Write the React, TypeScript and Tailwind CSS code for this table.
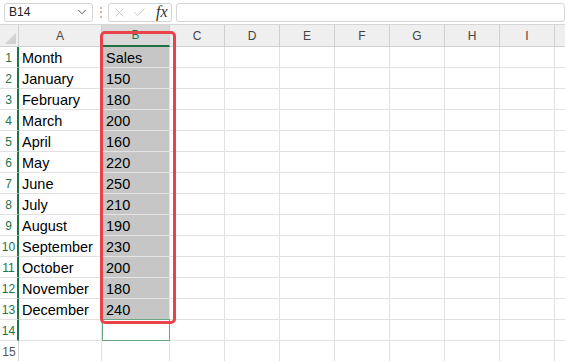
import { ChevronDown, X, Check } from 'lucide-react'

const rows: [string, string][] = [
  ['Month', 'Sales'],
  ['January', '150'],
  ['February', '180'],
  ['March', '200'],
  ['April', '160'],
  ['May', '220'],
  ['June', '250'],
  ['July', '210'],
  ['August', '190'],
  ['September', '230'],
  ['October', '200'],
  ['November', '180'],
  ['December', '240'],
  ['', ''],
  ['', ''],
]

const otherCols = ['C', 'D', 'E', 'F', 'G', 'H', 'I']

export default function App() {
  return (
    <div className="relative w-[565px] h-[361px] overflow-hidden bg-white" style={{ fontFamily: '"Liberation Sans", Arial, sans-serif' }}>
      {/* Formula bar */}
      <div className="flex items-center h-[25px] border-b border-[#d6d6d6] pl-[4px]">
        <div className="flex items-center justify-between w-[89px] h-[19px] border border-[#d4d4d4] rounded-[3px] pl-[4px] pr-[3px] text-[12px] text-[#222]">
          <span>B14</span>
          <ChevronDown size={14} strokeWidth={1.5} className="text-[#444]" />
        </div>
        <div className="w-[15px] flex justify-center text-[#9a9a9a] text-[12px] leading-none">⋮</div>
        <div className="flex items-center gap-[5px] w-[64px] h-[19px] border border-[#d4d4d4] rounded-[3px] pl-[3px]">
          <X size={15} strokeWidth={1} className="text-[#b4b4b4]" />
          <Check size={15} strokeWidth={1} className="text-[#b4b4b4]" />
          <span className="italic text-[16px] leading-none text-[#333] ml-[4px]" style={{ fontFamily: '"Liberation Serif", serif' }}>fx</span>
        </div>
        <div className="ml-[4px] flex-1 h-[19px] border border-[#d4d4d4] rounded-[3px]" />
      </div>

      {/* Sheet grid */}
      <div className="grid grid-cols-[19px_83px_68px_repeat(7,55px)_1fr] grid-rows-[22px_repeat(15,21px)]">
        {/* Column header row */}
        <div className="relative bg-[#efefef] border-r border-b border-[#d0d0d0]">
          <div className="absolute right-[2px] bottom-[2px] w-0 h-0 border-l-[11px] border-l-transparent border-b-[11px] border-b-[#d2d2d2]" />
        </div>
        <div className="flex items-center justify-center bg-[#efefef] border-r border-b border-[#d0d0d0] text-[12px] text-[#444]">A</div>
        <div className="flex items-center justify-center bg-[#d9d9d9] border-r border-[#d0d0d0] border-b-2 border-b-[#217346] text-[12px] text-[#217346]">B</div>
        {otherCols.map((c) => (
          <div key={c} className="flex items-center justify-center bg-[#efefef] border-r border-b border-[#d0d0d0] text-[12px] text-[#444]">
            {c}
          </div>
        ))}
        <div className="bg-[#efefef] border-b border-[#d0d0d0]" />

        {rows.map(([month, sales], i) => {
          const n = i + 1
          const selected = n <= 14
          return [
            <div
              key={`h${n}`}
              className={
                selected
                  ? 'flex items-center justify-center pt-[2px] bg-white border-b border-[#e1e1e1] border-r-2 border-r-[#217346] text-[12px] text-[#217346]'
                  : 'flex items-center justify-center pt-[2px] bg-white border-b border-r border-[#d6d6d6] text-[12px] text-[#555]'
              }
            >
              {n}
            </div>,
            <div key={`a${n}`} className="flex items-end pl-[3px] border-r border-b border-[#e1e1e1] text-[14.5px] leading-[17px] text-black">
              {month}
            </div>,
            n <= 13 ? (
              <div key={`b${n}`} className="flex items-end pl-[3px] bg-[#c6c6c6] border-x border-b border-[#e4e4e4] text-[14.5px] leading-[17px] text-black">
                {sales}
              </div>
            ) : n === 14 ? (
              <div key={`b${n}`} className="border border-[#6aa884] -mt-px" />
            ) : (
              <div key={`b${n}`} className="border-r border-b border-[#e1e1e1]" />
            ),
            ...otherCols.map((c) => <div key={`${c}${n}`} className="border-r border-b border-[#e1e1e1]" />),
            <div key={`z${n}`} className="border-b border-[#e1e1e1]" />,
          ]
        })}
      </div>

      {/* Red highlight around column B */}
      <div className="absolute left-[100px] top-[31px] w-[76px] h-[293px] border-[3px] border-[#e8434b] rounded-[5px] pointer-events-none" />
    </div>
  )
}
